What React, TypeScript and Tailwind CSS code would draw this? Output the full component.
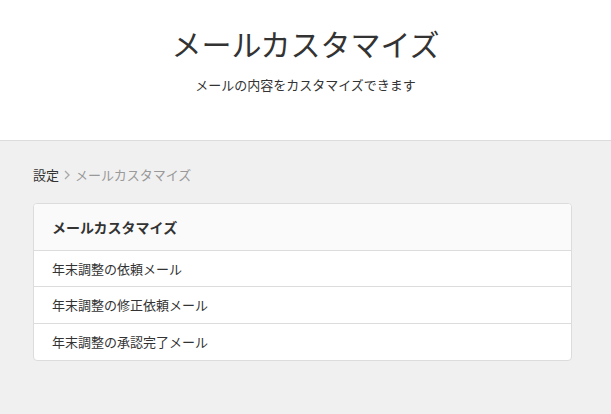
const rows = ['年末調整の依頼メール', '年末調整の修正依頼メール', '年末調整の承認完了メール'];

export default function App() {
  return (
    <div
      className="min-h-[414px] bg-[#f0f0f0] text-[#333]"
      style={{ fontFamily: '"Noto Sans CJK JP", "Noto Sans", sans-serif' }}
    >
      <header className="h-[141px] bg-white border-b border-[#dcdcdc] flex flex-col items-center">
        <h1 className="mt-[21px] text-[30px] leading-[44px] font-normal">メールカスタマイズ</h1>
        <p className="mt-[10px] text-[13px] leading-[20px]">メールの内容をカスタマイズできます</p>
      </header>

      <nav className="ml-[33px] mt-[24px] flex items-center text-[13px] leading-[20px]">
        <span>設定</span>
        <svg className="mx-[4px]" width="8" height="12" viewBox="0 0 8 12" fill="none">
          <path d="M2 2l4 4-4 4" stroke="#aaa" strokeWidth="1.4" />
        </svg>
        <span className="text-[#999]">メールカスタマイズ</span>
      </nav>

      <div className="ml-[33px] mt-[18px] w-[539px] bg-white border border-[#dcdcdc] rounded-[4px] overflow-hidden">
        <div className="h-[47px] bg-[#fafafa] border-b border-[#dcdcdc] flex items-center px-[18px] text-[14px] font-semibold">
          メールカスタマイズ
        </div>
        {rows.map((r, i) => (
          <div
            key={r}
            className={`flex items-center px-[18px] text-[13px] ${i === 1 ? 'h-[37px]' : 'h-[36px]'} ${i < rows.length - 1 ? 'border-b border-[#dcdcdc]' : ''}`}
          >
            {r}
          </div>
        ))}
      </div>
    </div>
  );
}
